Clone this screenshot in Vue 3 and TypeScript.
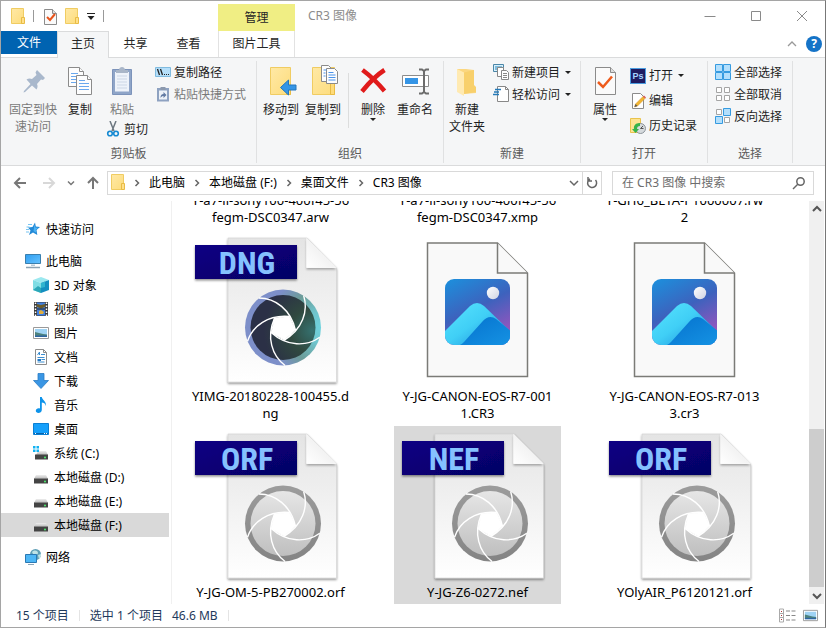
<script setup lang="ts">
import { ref } from 'vue'

interface NavItem { label: string; icon: string; level: number; gap?: boolean }
interface FileItem { lines: string[]; kind: 'raw' | 'image'; tag?: string; color?: boolean }

const navItems: NavItem[] = [
  { label: '快速访问', icon: 'star', level: 0 },
  { label: '此电脑', icon: 'computer', level: 0, gap: true },
  { label: '3D 对象', icon: 'cube', level: 1 },
  { label: '视频', icon: 'film', level: 1 },
  { label: '图片', icon: 'picture', level: 1 },
  { label: '文档', icon: 'document', level: 1 },
  { label: '下载', icon: 'download', level: 1 },
  { label: '音乐', icon: 'music', level: 1 },
  { label: '桌面', icon: 'desktop', level: 1 },
  { label: '系统 (C:)', icon: 'system', level: 1 },
  { label: '本地磁盘 (D:)', icon: 'drive', level: 1 },
  { label: '本地磁盘 (E:)', icon: 'drive', level: 1 },
  { label: '本地磁盘 (F:)', icon: 'drive', level: 1 },
  { label: '网络', icon: 'network', level: 0, gap: true },
]

const files: FileItem[] = [
  { lines: ['Y-a7-ii-sony100-400f45-56', 'fegm-DSC0347.arw'], kind: 'raw' },
  { lines: ['Y-a7-ii-sony100-400f45-56', 'fegm-DSC0347.xmp'], kind: 'image' },
  { lines: ['Y-GH6_BETA-P1000007.rw', '2'], kind: 'raw' },
  { lines: ['YIMG-20180228-100455.d', 'ng'], kind: 'raw', tag: 'DNG', color: true },
  { lines: ['Y-JG-CANON-EOS-R7-001', '1.CR3'], kind: 'image' },
  { lines: ['Y-JG-CANON-EOS-R7-013', '3.cr3'], kind: 'image' },
  { lines: ['Y-JG-OM-5-PB270002.orf'], kind: 'raw', tag: 'ORF' },
  { lines: ['Y-JG-Z6-0272.nef'], kind: 'raw', tag: 'NEF' },
  { lines: ['YOlyAIR_P6120121.orf'], kind: 'raw', tag: 'ORF' },
]

const crumbs = ['此电脑', '本地磁盘 (F:)', '桌面文件', 'CR3 图像']
const bladeAngles = [0, 72, 144, 216, 288]
const selectedFile = ref(7)
const selectedNav = ref(12)
const query = ref('')
</script>

<template>
  <div class="window">
    <svg class="defs" aria-hidden="true">
      <defs>
        <linearGradient id="gFolder" x1="0" y1="0" x2="1" y2="1">
          <stop offset="0" stop-color="#ffe9a6" /><stop offset="1" stop-color="#fddc7c" />
        </linearGradient>
        <linearGradient id="gPage" x1="0" y1="0" x2="0" y2="1">
          <stop offset="0" stop-color="#e4e4e4" /><stop offset=".55" stop-color="#f3f3f3" /><stop offset="1" stop-color="#ffffff" />
        </linearGradient>
        <linearGradient id="gFold" x1="0" y1="1" x2="1" y2="0">
          <stop offset="0" stop-color="#ffffff" /><stop offset="1" stop-color="#e6e6e6" />
        </linearGradient>
        <linearGradient id="gBadge" x1="0" y1="0" x2="1" y2="1">
          <stop offset="0" stop-color="#0a0084" /><stop offset="1" stop-color="#050064" />
        </linearGradient>
        <linearGradient id="gGray" x1="0" y1="0" x2="0" y2="1">
          <stop offset="0" stop-color="#e6e6e6" /><stop offset="1" stop-color="#bfbfbf" />
        </linearGradient>
        <linearGradient id="gRing" x1="0" y1="0" x2="0" y2="1">
          <stop offset="0" stop-color="#9c9c9c" /><stop offset="1" stop-color="#848484" />
        </linearGradient>
        <radialGradient id="gRingColor" cx="1" cy=".5" r=".7">
          <stop offset="0" stop-color="#6fd3de" /><stop offset=".3" stop-color="#6fc4cc" /><stop offset=".68" stop-color="#6c9c98" /><stop offset="1" stop-color="#7d8fc9" />
        </radialGradient>
        <radialGradient id="gDark" cx=".95" cy=".55" r=".75">
          <stop offset="0" stop-color="#35716f" /><stop offset=".45" stop-color="#30493f" /><stop offset="1" stop-color="#2b3046" />
        </radialGradient>
        <linearGradient id="gSky" x1=".1" y1="0" x2=".6" y2="1">
          <stop offset="0" stop-color="#1e8ddb" /><stop offset=".5" stop-color="#3d62bd" /><stop offset="1" stop-color="#9b54be" />
        </linearGradient>
        <linearGradient id="gHill" x1=".2" y1=".2" x2=".9" y2=".8">
          <stop offset="0" stop-color="#4fdcfb" /><stop offset=".4" stop-color="#40cff6" /><stop offset="1" stop-color="#1e8fdd" />
        </linearGradient>
        <linearGradient id="gHill2" x1="0" y1="0" x2="1" y2="1">
          <stop offset="0" stop-color="#0470cd" /><stop offset="1" stop-color="#1694e4" />
        </linearGradient>
        <linearGradient id="gSun" x1="0" y1="0" x2="1" y2="1">
          <stop offset="0" stop-color="#ffffff" /><stop offset="1" stop-color="#cfd3e2" />
        </linearGradient>
        <linearGradient id="gScreen" x1="0" y1="0" x2="1" y2="1">
          <stop offset="0" stop-color="#2e9df0" /><stop offset="1" stop-color="#66c3ff" />
        </linearGradient>
        <linearGradient id="gDrive" x1="0" y1="0" x2="0" y2="1">
          <stop offset="0" stop-color="#eeeeee" /><stop offset="1" stop-color="#b5b5b5" />
        </linearGradient>
        <filter id="fShadow" x="-10%" y="-10%" width="120%" height="125%">
          <feDropShadow dx="0" dy="1.5" stdDeviation="1" flood-color="#000" flood-opacity=".45" />
        </filter>
        <clipPath id="cPhoto"><rect x="51" y="49" width="65" height="66" rx="9" /></clipPath>
      </defs>

      <symbol id="i-folder" viewBox="0 0 14 17">
        <path d="M.5.5h12v15H.5z" fill="url(#gFolder)" stroke="#f0cc62" /><path d="M10.500 9.500h3v6h-3z" fill="#ffe08a" stroke="#e9bc45" />
      </symbol>
      <symbol id="i-doccheck" viewBox="0 0 13 17">
        <path d="M.5 1.500h8l4 4v11H.500z" fill="#fafafa" stroke="#8b8b8b" /><path d="M8.500 1.500v4h4" fill="#ddd" stroke="#8b8b8b" />
        <path d="M3 9l3 3 5-6" fill="none" stroke="#e8541c" stroke-width="2" />
      </symbol>
      <symbol id="i-star" viewBox="0 0 16 16">
        <path d="M10 1.500l.8 4 4.200.5-3.500 3 .8 5-4.300-2.500-4 2.500 1.500-4.500L3 6.500l4.500-.5z" fill="#2389d6" />
        <path d="M9.500 3.500l.8 3 3 .2-2.500 2 .5 3-2.800-1.700z" fill="#4bb3f5" />
        <path d="M3 3.500h4M1.500 6h3M1 8.500h3M1 11h3" stroke="#77c5f2" />
      </symbol>
      <symbol id="i-computer" viewBox="0 0 16 16">
        <path d="M.5 1.500h15v9H.5z" fill="url(#gScreen)" stroke="#3a7fae" /><path d="M6 11.500h4v1.500H6z" fill="#b8cad6" /><path d="M1 14.500h14" stroke="#8ba2b2" stroke-width="1.500" />
      </symbol>
      <symbol id="i-cube" viewBox="0 0 16 16">
        <path d="M8 0l8 3-8 3-8-3z" fill="#9be8ef" /><path d="M0 3l8 3v10l-8-3z" fill="#7fdde4" /><path d="M16 3L8 6v10l8-3z" fill="#148fc0" /><path d="M0 13l5-4 3 2v5z" fill="#2ba7b8" /><path d="M8 6l4-1.500V10l-4 1z" fill="#2fb4cf" />
      </symbol>
      <symbol id="i-film" viewBox="0 0 16 16">
        <path d="M1 1h14v14H1z" fill="#3a3a3a" /><path d="M4 1.500h8v13H4z" fill="#3f7fe0" /><path d="M4 3l4 1 4-1v3l-4 1.500L4 6z" fill="#6a5b2a" /><path d="M6 10l2-1 3 2-1 2H6z" fill="#e0ae3d" /><path d="M4 8h8" stroke="#222" />
        <path d="M2.500 1.500v14M13.500 1.500v14" stroke="#fff" stroke-width="1.500" stroke-dasharray="1.500 1.500" />
      </symbol>
      <symbol id="i-picture" viewBox="0 0 16 16">
        <path d="M.5 2.500h15v11H.5z" fill="#fff" stroke="#9a9a9a" /><path d="M2 4h12v8H2z" fill="#9fd3f4" /><path d="M2 7l4 1 4 1 4 .5v2H2z" fill="#4d827e" /><path d="M2 10.500h12V12H2z" fill="#2e65a2" />
      </symbol>
      <symbol id="i-document" viewBox="0 0 16 16">
        <path d="M2.500.5h8l3 3v12h-11z" fill="#fff" stroke="#8c8c8c" /><path d="M10.500.5v3h3" fill="none" stroke="#8c8c8c" /><path d="M4.500 6l2-3v3M8 5.500h4M4.500 8.500h7M8.500 10.500H12M4.500 13h7" fill="none" stroke="#3d8ed0" /><path d="M4.500 10H8v2H4.500z" fill="#2277c4" />
      </symbol>
      <symbol id="i-download" viewBox="0 0 16 16">
        <path d="M5 .5h6v7h4.500L8 15.500.500 7.500H5z" fill="#3a96e4" stroke="#2a7cc4" stroke-width=".8" />
      </symbol>
      <symbol id="i-music" viewBox="0 0 16 16">
        <path d="M7 0h1.800c.3 3 4.700 4 4.200 9-.5-2.500-2.500-3.500-4.200-3.500v7.500c0 3.500-6 4-6 .8 0-2.200 2.500-3.200 4.200-2.300z" fill="#0d93ea" />
      </symbol>
      <symbol id="i-desktop" viewBox="0 0 16 16">
        <path d="M.5 2.500h15v11H.5z" fill="#16a0fb" stroke="#0b7fd3" /><path d="M1 12.500h14" stroke="#0764ad" /><path d="M2 12.500h1M11 12.500h1M13 12.500h1" stroke="#fff" />
      </symbol>
      <symbol id="i-drive" viewBox="0 0 16 16">
        <path d="M3 6h10l2 4H1z" fill="url(#gDrive)" /><path d="M1 9.500h14v5H1z" fill="#444" /><path d="M1 9.500h14" stroke="#888" /><circle cx="12" cy="12.500" r="1" fill="#4ef26e" />
      </symbol>
      <symbol id="i-system" viewBox="0 0 16 16">
        <path d="M5 6h8l2 4H3z" fill="url(#gDrive)" /><path d="M2 9.500h13v5H2z" fill="#444" /><circle cx="12" cy="12.500" r="1" fill="#4ef26e" />
        <path d="M0 1h2.500v2.500H0zM3.500 1H6v2.500H3.500zM0 4.500h2.500V7H0zM3.500 4.500H6V7H3.500z" fill="#12b2f2" />
      </symbol>
      <symbol id="i-network" viewBox="0 0 16 16">
        <circle cx="10.500" cy="5.500" r="5.500" fill="#5f9fb6" /><path d="M7 3c3-3 6-1 6 1s-3 1-4 3zM13 6l3-1v2l-2 3z" fill="#bfe3e6" /><path d="M.5 5.500h11v8H.5z" fill="#4db6f5" stroke="#2a78b3" /><path d="M3 15.500h6" stroke="#8ba5b8" />
      </symbol>
      <symbol id="i-pin" viewBox="0 0 32 32">
        <path d="M20 5l8 8-2 2-2-.5-4 4.500c1 2 .5 4-.5 5.500l-4.500-4-7 6.500-1.500.500.500-1.500L13.500 19l-4-4.500c1.500-1 3.500-1.500 5.500-.5l4.500-4-1-2.500z" fill="#a9b8cc" />
      </symbol>
      <symbol id="i-copy" viewBox="0 0 32 32">
        <g fill="#fdfdfd" stroke="#8b8b8b"><path d="M4.500 2.500h11l4 4v15h-15z" /><path d="M15.500 2.500v4h4" /><path d="M12.500 10.500h11l4 4v15h-15z" /><path d="M23.500 10.500v4h4" /></g>
        <path d="M7 8.500h7M7 11.500h5M7 14.500h5M7 17.500h5M15 15.500h6M15 18.500h10M15 21.500h10M15 24.500h10" stroke="#6aa8ee" />
      </symbol>
      <symbol id="i-paste" viewBox="0 0 32 32">
        <path d="M6.500 4.500h19v25h-19z" fill="#8fa5c8" stroke="#7c93ba" /><path d="M9 7h14v19.500H9z" fill="#eef3fa" /><path d="M10 5h3c0-4 6-4 6 0h3v3H10z" fill="#a9b6c8" /><path d="M11 11h10M11 14h10M11 17h10M11 20h10M11 23h10" stroke="#ccd7e6" />
      </symbol>
      <symbol id="i-path" viewBox="0 0 16 16">
        <path d="M.5 3.500h15v9H.5z" fill="#b5dffa" stroke="#80bbdf" /><path d="M2.500 5l2 6M5.500 5l2 6" stroke="#222" stroke-width="1.300" /><path d="M9 10.500h1M11 10.500h1M13 10.500h1" stroke="#222" />
      </symbol>
      <symbol id="i-shortcut" viewBox="0 0 16 16">
        <path d="M2 2h12v13.500H2z" fill="#8ea2c1" /><path d="M4 4.500h8v9H4z" fill="#edf2f8" /><path d="M5.500 1h5v3h-5z" fill="#8c99ad" /><path d="M5.500 12c0-3 1-4 3-4V6l3 3-3 3V10c-1 0-2 .5-3 2z" fill="#637ba3" />
      </symbol>
      <symbol id="i-cut" viewBox="0 0 16 16">
        <path d="M5 0l4 10M11 0L7 10" stroke="#6c7780" stroke-width="1.500" /><circle cx="5" cy="12.500" r="2.300" fill="none" stroke="#1489d2" stroke-width="1.600" /><circle cx="11" cy="12.500" r="2.300" fill="none" stroke="#1489d2" stroke-width="1.600" />
      </symbol>
      <symbol id="i-moveto" viewBox="0 0 32 32">
        <path d="M5.500 2.500h20v27h-20z" fill="url(#gFolder)" stroke="#f0cc62" /><path d="M21.500 20.500h4v9h-4z" fill="#fedb7a" stroke="#e9bc45" /><path d="M15.500 22.500l8-7.500v5h7.500v5h-7.500v5z" fill="#3595e6" stroke="#2477bd" />
      </symbol>
      <symbol id="i-copyto" viewBox="0 0 32 32">
        <path d="M5.500 2.500h22v27h-22z" fill="url(#gFolder)" stroke="#f0cc62" /><path d="M23.500 18.500h4v11h-4z" fill="#fedb7a" stroke="#e9bc45" />
        <g fill="#fdfdfd" stroke="#8b8b8b"><path d="M14.500.5h7l3 3v13h-10z" /><path d="M19.500 3.500h8l3 3v12h-11z" /></g><path d="M16.500 5h3M16.500 8h2M16.500 11h2M21.500 7.500h5M21.500 10h7M21.500 12.500h7M21.500 15h7" stroke="#4a93ea" />
      </symbol>
      <symbol id="i-delete" viewBox="0 0 32 32">
        <path d="M5.500 5C13 10.500 20 17 27.500 26M27.500 5C19 10.500 11 19 5 26.500" fill="none" stroke="#e01b1b" stroke-width="4.500" />
      </symbol>
      <symbol id="i-rename" viewBox="0 0 32 32">
        <path d="M3.500 10.500h26v11h-26z" fill="#fff" stroke="#8c8c8c" /><path d="M6 13h13v6H6z" fill="#3595e6" /><path d="M20 4.500h3l2 1.500 2-1.500h3M20 28.500h3l2-1.500 2 1.500h3M25 6v21" fill="none" stroke="#6c6c6c" stroke-width="2" />
      </symbol>
      <symbol id="i-newfolder" viewBox="0 0 32 32">
        <path d="M6 4h9l8 1v18l2 1v4l-14 1z" fill="#fbd780" /><path d="M6 4l7 3.500V31l-7-4z" fill="#ffeab2" /><path d="M13 7.500L23 5v15l2 2v5l-12 2z" fill="#f8d06c" />
      </symbol>
      <symbol id="i-newitem" viewBox="0 0 16 16">
        <path d="M.5.500h10v7H.5z" fill="#d8f0fb" stroke="#4a86a8" /><path d="M2 2h7v4H2z" fill="#7ebbdc" /><path d="M4.500 3.500h6v9h-6z" fill="#fff" stroke="#888" /><path d="M8.500 6.500h5l2 2v7h-7z" fill="#fff" stroke="#888" /><path d="M10 9.500h4M10 11.500h4M10 13.500h4" stroke="#888" />
      </symbol>
      <symbol id="i-access" viewBox="0 0 16 16">
        <path d="M4.500.5h8l3 3v12h-11z" fill="#fff" stroke="#888" /><path d="M12.500.5v3h3" fill="none" stroke="#888" /><path d="M2 3.500h6M1 6h5M0 8.500h6" stroke="#247ab8" stroke-width="1.500" />
      </symbol>
      <symbol id="i-props" viewBox="0 0 32 32">
        <path d="M6.500 2.500h15l5 5v22h-20z" fill="#fafafa" stroke="#8b8b8b" /><path d="M21.500 2.500v5h5" fill="#ddd" stroke="#8b8b8b" /><path d="M9 17l5 5 9-10.500" fill="none" stroke="#ee5b1c" stroke-width="2.500" />
      </symbol>
      <symbol id="i-edit" viewBox="0 0 16 16">
        <path d="M2.500.5h8l3 3v12h-11z" fill="#fff" stroke="#8b8b8b" /><path d="M4.500 14l1-3 7.500-7.500 2 2L7.500 13z" fill="#f2b530" stroke="#d1902a" stroke-width=".5" /><path d="M13 3.500l1-1 2 2-1 1z" fill="#d85656" /><path d="M4.500 14l1-3 2 2z" fill="#555" />
      </symbol>
      <symbol id="i-history" viewBox="0 0 16 16">
        <path d="M.5.500h10v14H.5z" fill="#fce393" stroke="#e9c34d" /><circle cx="10.500" cy="10.500" r="5" fill="#d6dadd" stroke="#8c9399" /><path d="M10.500 10.500l2.500-2.500M10.500 10.500h3" stroke="#555" /><path d="M10 5C5 5 3.500 8 4 11H2l3.500 4L9 11H7c0-2 1-3 3-3z" fill="#37b34a" />
      </symbol>
      <symbol id="i-all" viewBox="0 0 16 16">
        <path d="M.5.500h7v7h-7zM8.500.500h7v7h-7zM.5 8.500h7v7h-7zM8.500 8.500h7v7h-7z" fill="#b3dffc" stroke="#369be0" />
      </symbol>
      <symbol id="i-none" viewBox="0 0 16 16">
        <path d="M1.500 1.500h5v5h-5zM9.500 1.500h5v5h-5zM1.500 9.500h5v5h-5zM9.500 9.500h5v5h-5z" fill="#fff" stroke="#a5a5a5" />
      </symbol>
      <symbol id="i-invert" viewBox="0 0 16 16">
        <path d="M1.500 1.500h5v5h-5zM9.500 9.500h5v5h-5z" fill="#fff" stroke="#a5a5a5" /><path d="M8.500.500h7v7h-7zM.5 8.500h7v7h-7z" fill="#b3dffc" stroke="#369be0" />
      </symbol>
    </svg>

    <header class="top">
      <div class="quick">
        <svg class="i-fold"><use href="#i-folder" /></svg>
        <span class="bar"></span>
        <button class="plain" aria-label="属性"><svg class="i-check"><use href="#i-doccheck" /></svg></button>
        <button class="plain" aria-label="新建文件夹"><svg class="i-fold"><use href="#i-folder" /></svg></button>
        <button class="plain" aria-label="自定义快速访问工具栏"><svg class="i-more" viewBox="0 0 8 8"><path d="M0 1.500h8" stroke="#222" /><path d="M.5 4h7L4 8z" fill="#222" /></svg></button>
        <span class="bar"></span>
      </div>
      <nav class="tabs">
        <button class="tab file">文件</button>
        <button class="tab active">主页</button>
        <button class="tab">共享</button>
        <button class="tab">查看</button>
      </nav>
      <div class="context">
        <div class="manage">管理</div>
        <button class="tab tool">图片工具</button>
      </div>
      <h1 class="title">CR3 图像</h1>
      <div class="controls">
        <button aria-label="最小化"><svg viewBox="0 0 12 12"><path d="M.5 6.500h11" /></svg></button>
        <button aria-label="最大化"><svg viewBox="0 0 12 12"><path d="M1.500 1.500h9v9h-9z" /></svg></button>
        <button aria-label="关闭"><svg viewBox="0 0 12 12"><path d="M1 1l10 10M11 1L1 11" /></svg></button>
      </div>
      <div class="helpers">
        <button class="plain" aria-label="最小化功能区"><svg class="i-chev" viewBox="0 0 10 10"><path d="M1 7l4-4 4 4" fill="none" stroke="#999" stroke-width="1.300" /></svg></button>
        <button class="help" aria-label="帮助">?</button>
      </div>
    </header>

    <section class="ribbon">
      <div class="group clip">
        <div class="body">
          <button class="big off wide"><svg><use href="#i-pin" /></svg><span>固定到快<br>速访问</span></button>
          <button class="big slim"><svg><use href="#i-copy" /></svg><span>复制</span></button>
          <div class="stack paste">
            <button class="big off"><svg><use href="#i-paste" /></svg><span>粘贴</span></button>
            <button class="small cut"><svg><use href="#i-cut" /></svg>剪切</button>
          </div>
          <div class="stack">
            <button class="small"><svg><use href="#i-path" /></svg>复制路径</button>
            <button class="small off"><svg><use href="#i-shortcut" /></svg>粘贴快捷方式</button>
          </div>
        </div>
        <div class="name">剪贴板</div>
      </div>
      <div class="group org">
        <div class="body">
          <button class="big"><svg><use href="#i-moveto" /></svg><span>移动到</span><i class="arrow"></i></button>
          <button class="big"><svg><use href="#i-copyto" /></svg><span>复制到</span><i class="arrow"></i></button>
          <span class="rule"></span>
          <button class="big"><svg><use href="#i-delete" /></svg><span>删除</span><i class="arrow"></i></button>
          <button class="big"><svg><use href="#i-rename" /></svg><span>重命名</span></button>
        </div>
        <div class="name">组织</div>
      </div>
      <div class="group new">
        <div class="body">
          <button class="big"><svg><use href="#i-newfolder" /></svg><span>新建<br>文件夹</span></button>
          <div class="stack">
            <button class="small"><svg><use href="#i-newitem" /></svg>新建项目<i class="arrow"></i></button>
            <button class="small"><svg><use href="#i-access" /></svg>轻松访问<i class="arrow"></i></button>
          </div>
        </div>
        <div class="name">新建</div>
      </div>
      <div class="group open">
        <div class="body">
          <button class="big"><svg><use href="#i-props" /></svg><span>属性</span><i class="arrow"></i></button>
          <div class="stack loose">
            <button class="small"><span class="ps" aria-hidden="true">Ps</span>打开<i class="arrow"></i></button>
            <button class="small"><svg><use href="#i-edit" /></svg>编辑</button>
            <button class="small"><svg><use href="#i-history" /></svg>历史记录</button>
          </div>
        </div>
        <div class="name">打开</div>
      </div>
      <div class="group sel">
        <div class="body">
          <div class="stack">
            <button class="small"><svg><use href="#i-all" /></svg>全部选择</button>
            <button class="small"><svg><use href="#i-none" /></svg>全部取消</button>
            <button class="small"><svg><use href="#i-invert" /></svg>反向选择</button>
          </div>
        </div>
        <div class="name">选择</div>
      </div>
    </section>

    <section class="address">
      <div class="arrows">
        <button class="plain" aria-label="后退"><svg viewBox="0 0 14 14"><path d="M13 7H2M7 2L2 7l5 5" stroke="#777" /></svg></button>
        <button class="plain forward" aria-label="前进"><svg viewBox="0 0 14 14"><path d="M1 7h11M7 2l5 5-5 5" stroke="#d8d8d8" /></svg></button>
        <button class="plain" aria-label="最近位置"><svg class="tiny" viewBox="0 0 8 8"><path d="M1 2.500l3 3 3-3" stroke="#777" /></svg></button>
        <button class="plain" aria-label="上移"><svg viewBox="0 0 14 14"><path d="M7 13V2M2 7l5-5 5 5" stroke="#777" /></svg></button>
      </div>
      <div class="path">
        <svg class="i-fold"><use href="#i-folder" /></svg>
        <template v-for="c in crumbs" :key="c">
          <svg class="sep" viewBox="0 0 8 8"><path d="M2.500 1l3 3-3 3" /></svg>
          <button class="crumb">{{ c }}</button>
        </template>
        <button class="plain drop" aria-label="以前的位置"><svg viewBox="0 0 12 12"><path d="M2 4l4 4 4-4" /></svg></button>
        <button class="plain refresh" aria-label="刷新"><svg viewBox="0 0 14 14"><path d="M10.500 4A4.500 4.500 0 1 1 5 3M3 1v4h4" /></svg></button>
      </div>
      <label class="search">
        <input v-model="query" type="text" placeholder="在 CR3 图像 中搜索" aria-label="搜索">
        <svg viewBox="0 0 14 14"><circle cx="8.500" cy="5.500" r="3.700" /><path d="M6 8l-5 5" /></svg>
      </label>
    </section>

    <main class="content">
      <nav class="tree">
        <a v-for="(n, i) in navItems" :key="n.label" href="#" class="node" :class="{ child: n.level === 1, gap: n.gap, on: i === selectedNav }" @click.prevent="selectedNav = i">
          <svg><use :href="'#i-' + n.icon" /></svg>{{ n.label }}
        </a>
      </nav>
      <div class="files">
        <div class="grid">
          <button v-for="(f, i) in files" :key="i" class="tile" :class="{ on: i === selectedFile }" @click="selectedFile = i">
            <svg v-if="f.kind === 'raw'" class="thumb" viewBox="0 0 167 158">
              <path d="M41 8h79l29.500 30v114H41z" fill="url(#gPage)" stroke="#d2d2d2" stroke-width=".6" filter="url(#fShadow)" />
              <path d="M119.500 8l30 30h-30z" fill="#fff" opacity=".7" filter="url(#fShadow)" />
              <path d="M119.500 8l30 29.500h-30z" fill="url(#gFold)" />
              <g transform="translate(96 97.500)">
                <circle r="38" :fill="f.color ? 'url(#gRingColor)' : 'url(#gRing)'" />
                <circle r="32.500" :fill="f.color ? 'url(#gDark)' : 'url(#gGray)'" />
                <path d="M12.400 2.600L1.300 12.600L-11.600 5.200L-8.500-9.400L6.300-11z" fill="#fff" stroke="#fff" stroke-width="1" />
                <path v-for="a in bladeAngles" :key="a" :transform="`rotate(${a})`" d="M-24-29.500C-8-29.500 8-18 12.500 3" fill="none" stroke="#fff" stroke-width="1.400" />
              </g>
              <path d="M8 15h102v34H8z" fill="url(#gBadge)" filter="url(#fShadow)" />
              <text v-if="f.tag" class="tag" x="60" y="44" text-anchor="middle">{{ f.tag }}</text>
            </svg>
            <svg v-else class="thumb" viewBox="0 0 167 158">
              <path d="M33.500 13h70l30 30v103.500h-100z" fill="#f9f9f9" stroke="#7b7b77" stroke-width="1.500" />
              <path d="M103.500 13v30h30" fill="#f9f9f9" stroke="#7b7b77" stroke-width="1.500" />
              <g clip-path="url(#cPhoto)">
                <path d="M51 49h65v66H51z" fill="url(#gSky)" />
                <path d="M47 105L76 76q7-6 14 0l28 27v14H47z" fill="url(#gHill)" />
                <path d="M60 117q6-1 10-5l18-20q7-8 14-3l16 13v15z" fill="url(#gHill2)" />
              </g>
              <circle cx="99" cy="63" r="6.200" fill="url(#gSun)" />
            </svg>
            <span v-for="l in f.lines" :key="l" class="line">{{ l }}</span>
          </button>
        </div>
      </div>
      <div class="scroll" aria-hidden="true">
        <svg viewBox="0 0 15 17"><path d="M4 10l4-4 4 4" /></svg>
        <span class="thumbbar"></span>
        <svg viewBox="0 0 15 17"><path d="M4 7l4 4 4-4" /></svg>
      </div>
    </main>

    <footer class="status">
      <span>15 个项目</span><i></i>
      <span class="picked">选中 1 个项目</span><span>46.6 MB</span><i></i>
      <div class="views">
        <button class="plain" aria-label="详细信息"><svg viewBox="0 0 17 14"><path d="M.5.500h4v13h-4zM.5 5h4M.5 9h4" fill="#fff" stroke="#aaa" /><path d="M2 3h1M2 7h1M2 11h1" stroke="#a33" /><path d="M7 2.500h4M12.500 2.500h4M7 7h4M12.500 7h4M7 11.500h4M12.500 11.500h4" stroke="#888" /></svg></button>
        <button class="plain" aria-label="大图标"><svg><use href="#i-picture" /></svg></button>
      </div>
    </footer>
  </div>
</template>

<style>
body {
  margin: 0;
}
</style>

<style scoped>
.window {
  box-sizing: border-box;
  height: 100vh;
  display: flex;
  flex-direction: column;
  overflow: hidden;
  border: 1px solid #a5a5a5;
  border-right-color: #777;
  background: #fff;
  color: #000;
  font: 12px/17px "Noto Sans", "Noto Sans CJK SC", sans-serif;
}
.defs {
  position: absolute;
  width: 0;
  height: 0;
}
button {
  font: inherit;
  color: inherit;
  background: none;
  border: 0;
  padding: 0;
  margin: 0;
  white-space: nowrap;
}
svg {
  display: block;
  flex: none;
}
.plain {
  display: flex;
  align-items: center;
}

.top {
  display: grid;
  grid-template-columns: 217px 77px 1fr auto;
  grid-template-rows: 30px 26px;
  flex: none;
  color: #262626;
}
.quick {
  grid-area: 1 / 1;
  display: flex;
  align-items: center;
  gap: 8px;
  padding-left: 10px;
}
.bar {
  width: 1px;
  height: 12px;
  background: #999;
}
.quick .bar + .plain {
  margin-left: 2px;
}
.i-fold {
  width: 14px;
  height: 17px;
}
.i-check {
  width: 13px;
  height: 17px;
}
.i-more {
  width: 8px;
  height: 8px;
}
.i-chev {
  width: 10px;
  height: 10px;
}
.tabs {
  grid-area: 2 / 1;
  display: flex;
  align-items: stretch;
}
.tab {
  width: 53px;
  height: 26px;
  padding-bottom: 2px;
}
.file {
  width: 56px;
  height: 23px;
  padding: 0;
  color: #fff;
  background: #0063b1;
}
.active {
  box-sizing: border-box;
  width: 52px;
  height: 27px;
  position: relative;
  padding-bottom: 3px;
  border: 1px solid #dadbdc;
  border-bottom: 0;
  background: #f5f6f7;
}
.context {
  grid-area: 1 / 2 / 3 / 3;
  padding-top: 3px;
}
.manage {
  height: 27px;
  line-height: 27px;
  text-align: center;
  background: #f0ee84;
}
.tool {
  box-sizing: border-box;
  width: 100%;
  border: 1px solid #e2e2e2;
  border-width: 0 1px;
}
.title {
  grid-area: 1 / 3;
  margin: 0;
  padding-left: 13px;
  font: inherit;
  line-height: 30px;
  color: #8c8c8c;
}
.controls {
  grid-area: 1 / 4;
  display: flex;
}
.controls button {
  width: 46px;
  display: flex;
  align-items: center;
  justify-content: center;
}
.controls svg {
  width: 12px;
  height: 12px;
  fill: none;
  stroke: #8a8a8a;
}
.helpers {
  grid-area: 2 / 4;
  display: flex;
  align-items: center;
  justify-content: flex-end;
  gap: 9px;
  padding-right: 3px;
}
.help {
  width: 16px;
  height: 16px;
  border-radius: 8px;
  line-height: 16px;
  font-weight: 700;
  color: #fff;
  background: #1573c7;
}

.ribbon {
  flex: none;
  display: flex;
  padding: 3px 0 2px;
  border-top: 1px solid #dadbdc;
  border-bottom: 1px solid #dadbdc;
  background: #f5f6f7;
  color: #1e1e1e;
}
.group {
  box-sizing: border-box;
  display: flex;
  flex-direction: column;
  border-right: 1px solid #e0e1e2;
}
.clip {
  width: 256px;
}
.org {
  width: 187px;
}
.new {
  width: 137px;
}
.open {
  width: 127px;
}
.sel {
  width: 85px;
}
.body {
  display: flex;
  height: 83px;
}
.name {
  height: 19px;
  line-height: 19px;
  text-align: center;
  color: #5a5a5a;
}
.big {
  width: 42px;
  display: flex;
  flex-direction: column;
  align-items: center;
  padding-top: 4px;
}
.big svg {
  width: 32px;
  height: 32px;
  margin-bottom: 4px;
}
.wide {
  width: 58px;
}
.slim {
  width: 36px;
}
.off {
  color: #7a7a7a;
}
.arrow {
  width: 0;
  height: 0;
  border: 3px solid transparent;
  border-top-color: #222;
  border-bottom: 0;
}
.stack {
  display: flex;
  flex-direction: column;
  align-items: flex-start;
}
.small {
  height: 22px;
  display: flex;
  align-items: center;
  gap: 3px;
}
.small svg {
  width: 16px;
  height: 16px;
}
.small .arrow {
  margin-left: 2px;
}
.ps {
  box-sizing: border-box;
  width: 16px;
  height: 16px;
  border: 1px solid #4b9de0;
  background: #1f1c61;
  color: #a6d3ff;
  font: 700 9px/14px "Liberation Sans", sans-serif;
  text-align: center;
}
.clip .body {
  padding-left: 3px;
}
.clip .paste {
  width: 54px;
  margin-left: 3px;
}
.cut {
  padding-left: 4px;
}
.org .body {
  padding-left: 3px;
}
.rule {
  width: 1px;
  height: 55px;
  margin: 12px 3px 0 4px;
  background: #dcdddd;
}
.new .body {
  padding-left: 2px;
}
.new .stack {
  margin-left: 5px;
}
.open .body {
  padding-left: 3px;
}
.open .stack {
  margin-left: 4px;
}
.open .loose {
  padding-top: 2px;
}
.loose .small {
  height: 25px;
}
.sel .body {
  padding-left: 7px;
}

.address {
  flex: none;
  display: flex;
  align-items: center;
  height: 33px;
  padding-bottom: 2px;
}
.arrows {
  display: flex;
  align-items: center;
  gap: 11px;
  width: 94px;
  padding-left: 12px;
}
.forward {
  margin-left: 4px;
}
.arrows svg {
  width: 14px;
  height: 14px;
  fill: none;
  stroke-width: 2;
}
.arrows .tiny {
  width: 8px;
  height: 8px;
  stroke-width: 1.5;
}
.path {
  box-sizing: border-box;
  flex: 1;
  min-width: 0;
  height: 24px;
  display: flex;
  align-items: center;
  padding-left: 3px;
  border: 1px solid #d9d9d9;
}
.sep {
  width: 8px;
  height: 8px;
  margin: 0 8px;
  fill: none;
  stroke: #666;
  stroke-width: 1.5;
}
.drop {
  margin-left: auto;
  padding-right: 2px;
}
.drop svg {
  width: 12px;
  height: 12px;
  fill: none;
  stroke: #666;
  stroke-width: 1.5;
}
.refresh {
  height: 22px;
  padding: 0 2px;
  border-left: 1px solid #d9d9d9;
}
.refresh svg,
.search svg {
  width: 14px;
  height: 14px;
  fill: none;
  stroke: #666;
  stroke-width: 1.5;
}
.search {
  box-sizing: border-box;
  width: 202px;
  height: 24px;
  margin: 0 11px 0 10px;
  padding: 0 7px 0 9px;
  display: flex;
  align-items: center;
  border: 1px solid #d9d9d9;
}
.search input {
  flex: 1;
  min-width: 0;
  padding: 0;
  border: 0;
  outline: 0;
  font: inherit;
}
.search input::placeholder {
  color: #6d6d6d;
  opacity: 1;
}

.content {
  flex: 1;
  min-height: 0;
  display: flex;
  padding-right: 1px;
}
.tree {
  width: 168px;
  padding: 16px 2px 0 0;
  border-right: 1px solid #f0f0f0;
}
.node {
  display: flex;
  align-items: center;
  gap: 5px;
  height: 24px;
  padding-left: 24px;
  color: #000;
  text-decoration: none;
}
.child {
  padding-left: 32px;
}
.gap {
  margin-top: 8px;
}
.node svg {
  width: 16px;
  height: 16px;
}
.node.on,
.tile.on {
  background: #d9d9d9;
}
.files {
  flex: 1;
  min-width: 0;
  display: flex;
  flex-direction: column;
  justify-content: flex-end;
  overflow: hidden;
}
.grid {
  display: grid;
  grid-template-columns: repeat(auto-fill, 167px);
  gap: 1px 40px;
  align-items: start;
  padding-left: 15px;
}
.tile {
  display: flex;
  flex-direction: column;
  align-items: center;
  padding-bottom: 3px;
}
.thumb {
  width: 167px;
  height: 158px;
}
.line {
  font-size: 13px;
}
.tag {
  font: 700 32px "Liberation Sans Narrow", "Roboto Condensed", "Open Sans Condensed", "DejaVu Sans Condensed", sans-serif;
  fill: #85c1ff;
}
.scroll {
  width: 15px;
  display: flex;
  flex-direction: column;
  background: #f0f0f0;
}
.scroll svg {
  width: 15px;
  height: 17px;
  fill: none;
  stroke: #555;
  stroke-width: 2;
}
.thumbbar {
  height: 43%;
  max-height: 158px;
  margin-top: auto;
  background: #cdcdcd;
}

.status {
  flex: none;
  height: 23px;
  display: flex;
  align-items: center;
  padding-left: 15px;
  color: #1e395b;
}
.status i {
  width: 1px;
  height: 11px;
  margin: 0 10px;
  background: #e4e4e4;
}
.picked {
  margin-right: 9px;
}
.views {
  display: flex;
  align-items: center;
  gap: 6px;
  margin-left: auto;
  padding-right: 6px;
}
.views svg {
  width: 17px;
  height: 15px;
}
</style>
